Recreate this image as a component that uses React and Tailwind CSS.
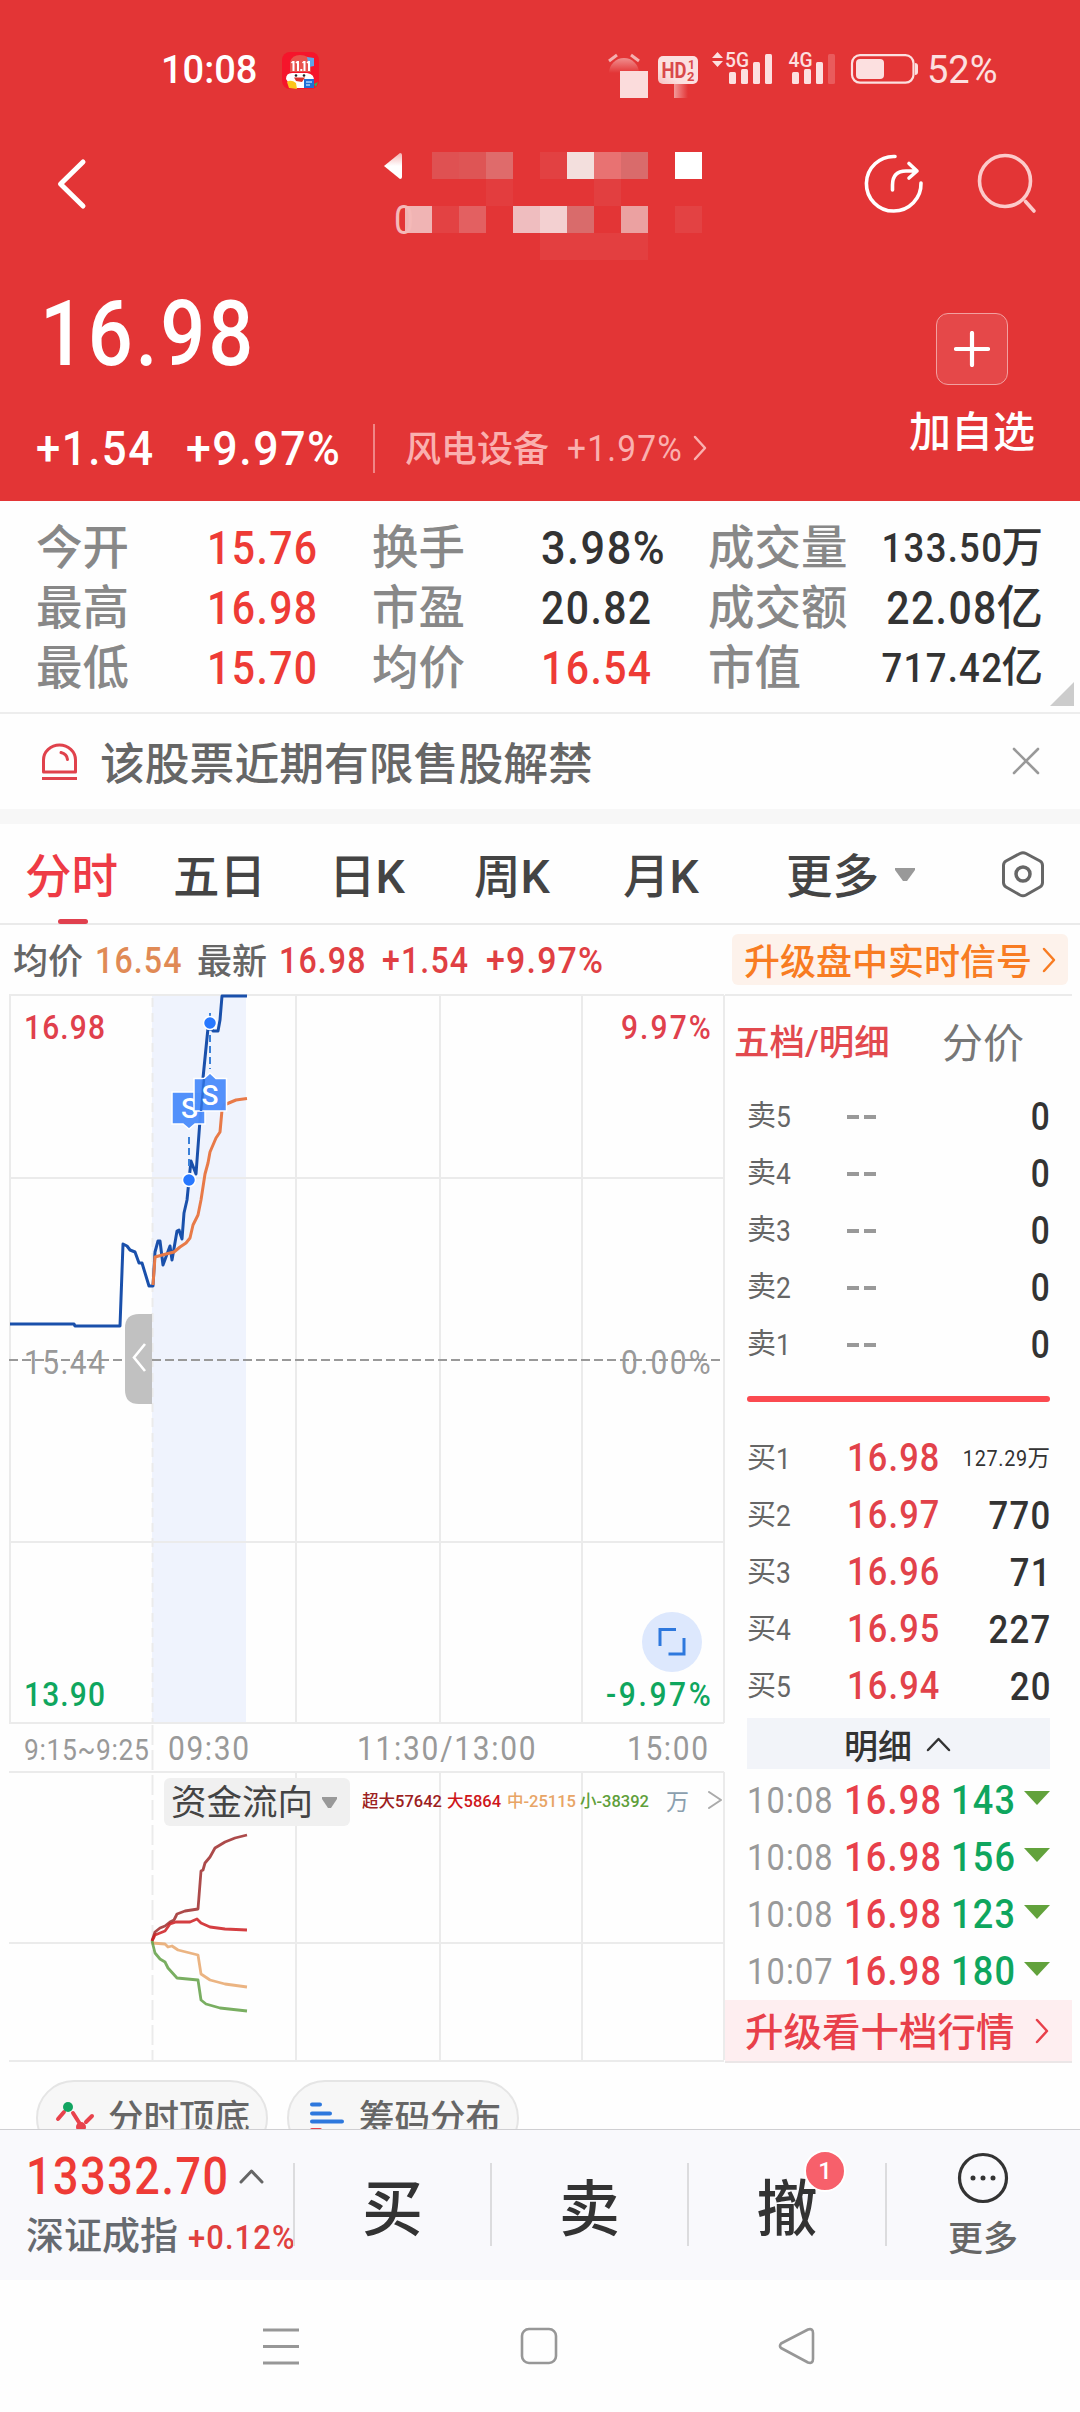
import { clsx } from "clsx";

const stats = [
  [
    { label: "今开", value: "15.76", red: true },
    { label: "换手", value: "3.98%" },
    { label: "成交量", value: "133.50", unit: "万", small: true },
  ],
  [
    { label: "最高", value: "16.98", red: true },
    { label: "市盈", value: "20.82" },
    { label: "成交额", value: "22.08", unit: "亿" },
  ],
  [
    { label: "最低", value: "15.70", red: true },
    { label: "均价", value: "16.54", red: true },
    { label: "市值", value: "717.42", unit: "亿", small: true },
  ],
];

const sells = ["5", "4", "3", "2", "1"];

const buys = [
  { level: "1", price: "16.98", amount: "127.29", unit: "万" },
  { level: "2", price: "16.97", amount: "770" },
  { level: "3", price: "16.96", amount: "71" },
  { level: "4", price: "16.95", amount: "227" },
  { level: "5", price: "16.94", amount: "20" },
];

const deals = [
  { time: "10:08", price: "16.98", amount: "143" },
  { time: "10:08", price: "16.98", amount: "156" },
  { time: "10:08", price: "16.98", amount: "123" },
  { time: "10:07", price: "16.98", amount: "180" },
];

// 12 x 4 censor grid over the stock name
const mosaic = [
  ["", "", "#df5152", "#de5555", "#df6b6b", "", "#e24142", "#f3dfdd", "#e87272", "#d96b6b", "", "#ffffff"],
  ["", "", "", "", "#e33d3e", "", "", "", "#e23f40", "", "", ""],
  ["", "#f0b4b4", "#e34243", "#e36061", "", "#efbdbf", "#f3d0d1", "#d96b6b", "", "#eba1a1", "", "#e34243"],
  ["", "", "", "", "", "", "#e33f40", "#e33f40", "#e33f40", "#e33f40", "", ""],
];

// condensed tabular digits, signed and percent values run a little wider
function Num({ children, className, right, wide }) {
  return (
    <span
      className={clsx(
        "inline-block tracking-[0.035em]",
        wide ? "scale-x-[0.93]" : "scale-x-[0.88]",
        right ? "-mr-[0.035em] origin-right" : "origin-left",
        className
      )}
    >
      {children}
    </span>
  );
}

function Chevron({ className, d = "M2 2 L12 13 L2 24", w = 14, h = 26, stroke = 2.5 }) {
  return (
    <svg className={clsx("shrink-0", className)} width={w} height={h} viewBox={`0 0 ${w} ${h}`} fill="none">
      <path d={d} stroke="currentColor" strokeWidth={stroke} strokeLinecap="round" strokeLinejoin="round" />
    </svg>
  );
}

function AppBadge() {
  return (
    <svg className="ml-[28px]" width="37" height="37" viewBox="0 0 37 37">
      <rect width="37" height="37" rx="8" fill="#f5152b" />
      <path d="M8 20 V10 Q10 3 18 3 Q27 3 29 10 V20 Z" fill="#e8534c" />
      <path d="M25 5 L32 6 L32 14 L27 15 Z" fill="#5fa5e8" />
      <path d="M4 27 Q4 20 12 21 L25 21 Q33 22 32 30 L24 36 L10 36 Z" fill="#fff" />
      <path d="M11.500 9 V19 M16 9 V19 M22.500 9 V19 M27 9 V19" stroke="#fff" strokeWidth="2" />
      <path d="M9.500 11 L11 9.500 M14 11 L15.500 9.500 M20.500 11 L22 9.500 M25 11 L26.500 9.500" stroke="#fff" strokeWidth="1.500" />
      <rect x="18.300" y="17" width="2" height="2" fill="#fff" />
      <circle cx="14" cy="23.500" r="1.300" fill="#222" />
      <circle cx="22" cy="23.500" r="1.300" fill="#222" />
      <path d="M12 25.500 H23 L20 30 L14 29 Z" fill="#d9342b" />
      <path d="M5 30 Q9 27 14 31 L15 37 L7 36 Z" fill="#fcc51c" />
      <rect x="22" y="27" width="10" height="9" fill="#1f6fd6" />
      <path d="M24 30 H30 M24 33 H28" stroke="#a8d2ff" strokeWidth="1.300" />
      <path d="M32 32 L36 30 L34 35 Z" fill="#2fb45a" />
    </svg>
  );
}

function StatusIcons() {
  return (
    <svg width="316" height="52" viewBox="605 50 316 52" fill="#fce0e0" overflow="visible">
      <defs>
        <linearGradient id="smear" x1="0" x2="1" y1="0" y2="0">
          <stop offset="0" stopColor="#f29a9a" />
          <stop offset="1" stopColor="#e33536" />
        </linearGradient>
        <linearGradient id="bell" x1="0" x2="0" y1="0" y2="1">
          <stop offset="0" stopColor="#f08f8f" />
          <stop offset="1" stopColor="#e33536" />
        </linearGradient>
        <linearGradient id="hd" x1="0" x2="1" y1="1" y2="0">
          <stop offset="0" stopColor="#f6c0c0" />
          <stop offset="0.3" stopColor="#fce0e0" />
        </linearGradient>
      </defs>
      {/* alarm */}
      <path d="M609 61 L617 55 M639 61 L631 55" stroke="#f4b0b0" strokeWidth="3" />
      <path d="M609 73 A15 15 0 0 1 639 73 Z" fill="url(#bell)" />
      <rect x="620" y="71" width="28" height="27" fill="#fbdcdc" />
      {/* hd */}
      <rect x="674" y="80" width="14" height="18" fill="url(#smear)" />
      <rect x="658" y="56" width="40" height="28" rx="5" fill="url(#hd)" />
      <text x="661.500" y="78" className="font-[Roboto] font-bold" fontSize="22" textLength="25" lengthAdjust="spacingAndGlyphs" fill="#d9494a">HD</text>
      <text x="688" y="69" className="font-[Roboto] font-bold" fontSize="12" fill="#d9494a">1</text>
      <text x="687" y="80.500" className="font-[Roboto] font-bold" fontSize="13" fill="#d9494a">2</text>
      {/* 5G */}
      <path d="M717.500 52 L723 58 H712 Z M717.500 67 L723 61 H712 Z" />
      <text x="725" y="67" className="font-[Roboto] font-medium" fontSize="20" textLength="24" lengthAdjust="spacingAndGlyphs">5G</text>
      <rect x="729" y="72" width="7" height="12" rx="1.500" />
      <rect x="741" y="69" width="7" height="15" rx="1.500" />
      <rect x="753" y="62" width="7" height="22" rx="1.500" />
      <rect x="765" y="54" width="7" height="30" rx="1.500" />
      {/* 4G */}
      <text x="788.500" y="67" className="font-[Roboto] font-medium" fontSize="20" textLength="24" lengthAdjust="spacingAndGlyphs">4G</text>
      <rect x="792" y="72" width="7" height="12" rx="1.500" />
      <rect x="804" y="69" width="7" height="15" rx="1.500" />
      <rect x="816" y="62" width="7" height="22" rx="1.500" />
      <rect x="828" y="54" width="7" height="30" rx="1.500" fill="#e95b5c" />
      {/* battery */}
      <rect x="852" y="55.200" width="61.500" height="27.500" rx="8" fill="none" stroke="#fce0e0" strokeWidth="2.200" />
      <rect x="856" y="59" width="28" height="20" rx="4" />
      <path d="M915 63 Q918 63 918 66 V72 Q918 75 915 75 Z" />
    </svg>
  );
}

function Header() {
  return (
    <header className="h-[501px] bg-[#e33536] text-white">
      <div className="flex h-[140px] items-center pr-[79px] pl-[161px]">
        <span className="w-[93px] text-[38px] font-medium">10:08</span>
        <AppBadge />
        <div className="mt-3 ml-auto">
          <StatusIcons />
        </div>
        <span className="ml-[6px] w-[74px] text-[38px] text-[#fce0e0]">52%</span>
      </div>

      <div className="flex h-[88px] items-center">
        <svg className="ml-[55px]" width="34" height="52" viewBox="0 0 34 52" fill="none">
          <path d="M28 4 L5.500 26 L28 48" stroke="#fff" strokeWidth="5" strokeLinecap="round" strokeLinejoin="round" />
        </svg>
        <div className="relative mt-[12px] ml-[289px] grid h-[108px] w-[324px] shrink-0 grid-cols-12 grid-rows-4 self-start">
          {mosaic.flat().map((color, i) => (
            <div key={i} style={{ backgroundColor: color || undefined }} />
          ))}
          <svg className="absolute top-0 left-0" width="60" height="108" viewBox="378 153 60 108">
            <defs>
              <linearGradient id="tri" x1="0" x2="0" y1="0" y2="1">
                <stop offset="0" stopColor="#f3b5b5" />
                <stop offset="0.5" stopColor="#fff" />
              </linearGradient>
            </defs>
            <path d="M384 167 L400 154 Q402 154 402 156 V178 Q402 180 400 180 Z" fill="url(#tri)" />
          </svg>
          <span className="absolute top-[49px] left-[16px] origin-left scale-x-[0.88] text-[40px] text-[#f4b9b9]">0</span>
        </div>
        <svg className="ml-[160px]" width="64" height="64" viewBox="862 152 64 64" fill="none" stroke="#fff" strokeWidth="3.600" strokeLinecap="round" strokeLinejoin="round">
          <path d="M895 156.500 A27.300 27.300 0 1 0 921 183" />
          <path d="M892.500 190 V185 Q892.500 171 906 171 H917 M909 163.500 L917 171 L909 178" />
        </svg>
        <svg className="ml-[49px]" width="64" height="64" viewBox="975 152 64 64" fill="none" stroke="#fccaca" strokeWidth="3.600" strokeLinecap="round">
          <circle cx="1005" cy="181" r="25.500" />
          <path d="M1025.500 201.500 L1034 211" />
        </svg>
      </div>

      <div className="flex justify-between">
        <div className="pt-[62px]">
          <div className="flex pl-[40px] text-[90px] font-medium">
            <Num>16.98</Num>
          </div>
          <div className="mt-[43px] flex h-[50px] items-center pl-[36px]">
            <div className="w-[150px] pt-[2px] text-[48px] font-medium">
              <Num className="scale-x-[0.91]">+1.54</Num>
            </div>
            <div className="w-[187px] pt-[2px] text-[48px] font-medium">
              <Num wide>+9.97%</Num>
            </div>
            <span className="h-[49px] w-[2px] bg-[#f08686]" />
            <span className="mt-[3px] ml-[30px] w-[162px] text-[36px] font-medium text-[#fab0af]">风电设备</span>
            <div className="w-[126px] pt-[2px] text-[36px] text-[#fab0af]">
              <Num wide>+1.97%</Num>
            </div>
            <Chevron className="text-[#fab0af]" />
          </div>
        </div>
        <div className="mr-[36px] flex w-[144px] flex-col items-center pt-[85px]">
          <div className="flex size-[72px] items-center justify-center rounded-xl border border-[#f2a0a0] bg-[#e54849]">
            <svg width="36" height="36" viewBox="0 0 36 36" stroke="#fff" strokeWidth="4.200" strokeLinecap="round">
              <path d="M18 2 V34 M2 18 H34" />
            </svg>
          </div>
          <span className="mt-[27px] text-[42px] font-medium">加自选</span>
        </div>
      </div>
    </header>
  );
}

function Stats() {
  return (
    <section className="relative h-[213px] border-b-2 border-[#ededed] pt-[17px]">
      {stats.map((row, i) => (
        <div key={i} className="flex h-[60px] items-center pr-[37px] pl-[36px] text-[46.500px] font-medium">
          <span className="w-[171px] text-[#888]">{row[0].label}</span>
          <div className="w-[165px] text-[#ee3b36]">
            <Num>{row[0].value}</Num>
          </div>
          <span className="w-[169px] text-[#888]">{row[1].label}</span>
          <div className={clsx("w-[167px]", row[1].red ? "text-[#ee3b36]" : "text-[#333]")}>
            <Num wide={row[1].value.endsWith("%")}>{row[1].value}</Num>
          </div>
          <span className="text-[#888]">{row[2].label}</span>
          <div className={clsx("ml-auto flex items-center text-[#333]", row[2].small ? "text-[41.500px]" : "text-[46.500px]")}>
            <Num right>{row[2].value}</Num>
            <span>{row[2].unit}</span>
          </div>
        </div>
      ))}
      <svg className="absolute right-[6px] bottom-[6px]" width="24" height="24" viewBox="0 0 24 24">
        <path d="M24 0 V24 H0 Z" fill="#ccc" />
      </svg>
    </section>
  );
}

function Notice() {
  return (
    <section className="flex h-[110px] items-center border-b-[15px] border-[#f7f7f7] pr-[39px] pl-[41px]">
      <svg width="37" height="38" viewBox="0 0 37 38" fill="none" stroke="#e0424c" strokeWidth="3">
        <path d="M2.500 29 V17 A16 15 0 0 1 34.500 17 V29 Z" strokeLinejoin="round" />
        <path d="M20 9.500 Q26 11 26.500 16.500" strokeLinecap="round" />
        <path d="M1 35.500 H36" />
      </svg>
      <span className="mt-[7px] ml-[22px] text-[44.800px] font-medium text-[#666]">该股票近期有限售股解禁</span>
      <Chevron className="mb-[2px] ml-auto text-[#999]" w={30} h={30} stroke={2.6} d="M3 3 L27 27 M27 3 L3 27" />
    </section>
  );
}

function Tabs() {
  return (
    <nav className="flex h-[101px] items-center border-b-2 border-[#eaeaea] pt-[8px] pl-[25px] text-[46.500px] font-medium text-[#444]">
      <div className="relative w-[148px] text-[#ee3b45]">
        分时
        <span className="absolute -bottom-[23px] left-[33px] h-[5px] w-[30px] rounded-full bg-[#e0404e]" />
      </div>
      <span className="w-[156px]">五日</span>
      <span className="w-[145px]">日K</span>
      <span className="w-[149px]">周K</span>
      <span className="w-[163px]">月K</span>
      <span className="w-[109px]">更多</span>
      <svg className="mb-[5px]" width="20" height="14" viewBox="0 0 20 14">
        <path d="M0 0 H20 V2 L12 13 H8 L0 2 Z" fill="#999" />
      </svg>
      <svg className="mb-[8px] ml-[85px]" width="46" height="50" viewBox="1000 849 46 50" fill="none" stroke="#666" strokeWidth="3">
        <path d="M1020 853.500 Q1023 852 1026 853.500 L1040 861 Q1042.500 862.500 1042.500 865.500 V882.500 Q1042.500 885.500 1040 887 L1026 895 Q1023 896.500 1020 895 L1006 887 Q1003.500 885.500 1003.500 882.500 V865.500 Q1003.500 862.500 1006 861 Z" />
        <circle cx="1023" cy="874" r="7" strokeWidth="3.500" />
      </svg>
    </nav>
  );
}

function QuoteLine() {
  return (
    <section className="flex h-[69px] items-center pl-[13px] text-[36.500px] font-medium">
      <span className="mt-[5px] w-[82px] text-[35px] text-[#666]">均价</span>
      <div className="mt-[3px] w-[102px] text-[#e08a55]">
        <Num>16.54</Num>
      </div>
      <span className="mt-[5px] w-[82px] text-[35px] text-[#666]">最新</span>
      <div className="mt-[3px] w-[103px] text-[#e03f43]">
        <Num>16.98</Num>
      </div>
      <div className="mt-[3px] w-[104px] text-[#e03f43]">
        <Num>+1.54</Num>
      </div>
      <div className="mt-[3px] text-[#e03f43]">
        <Num wide>+9.97%</Num>
      </div>
      <div className="mr-[12px] ml-auto flex h-[51px] w-[336px] items-center rounded-md bg-[#fdf2eb] pl-[12px] text-[36px] text-[#f87c22]">
        <span className="mt-[6px] w-[298px]">升级盘中实时信号</span>
        <Chevron w={14} h={26} />
      </div>
    </section>
  );
}

function PriceChart() {
  return (
    <svg className="absolute inset-0" width="725" height="1068" viewBox="0 994 725 1068" fill="none">
      <rect x="152" y="996" width="94" height="727" fill="#eff3fd" />
      <g stroke="#ebebeb" strokeWidth="2">
        <path d="M9 995 H724 M9 1178 H724 M9 1542 H724 M9 1723 H724 M9 1772 H724 M9 1943 H724" />
        <path d="M10 995 V1723 M296 995 V1723 M440 995 V1723 M582 995 V1723 M724 995 V1723" />
        <path d="M296 1772 V2060 M440 1772 V2060 M582 1772 V2060 M724 1772 V2060" />
        <path d="M152.500 998 V1723" strokeDasharray="9 6" />
        <path d="M152.500 1725 V2060" strokeDasharray="20 5" />
      </g>
      <path d="M9 2061 H724" stroke="#ebebeb" strokeWidth="2" />
      <g className="font-[Roboto]" fontSize="34" fill="#999">
        <text transform="translate(24 1374) scale(0.88 1)" textLength="92">15.44</text>
        <text transform="translate(621 1374) scale(0.88 1)" textLength="102">0.00%</text>
      </g>
      <path d="M9 1360 H724" stroke="#999" strokeWidth="2" strokeDasharray="9 4" />
      <path
        d="M10 1324 H74 L75 1326 H120 L123 1244 L127 1246 L130 1250 L135 1252 L139 1263 H142 L149 1286 H153 L155 1252 L158 1241 H160 L163 1265 L170 1246 L172 1260 L177 1231 L179 1230 L182 1239 L184 1213 L187 1200 L189 1180 L191 1161 L196 1174 L200 1120 L203 1078 L208 1028 L210 1023 L213 1031 H218 L220 1020 L222 996 H247"
        stroke="#1a50ab"
        strokeWidth="3"
        strokeLinejoin="round"
      />
      <path
        d="M153 1285 L155 1257 L166 1254 L174 1252 L180 1247 L186 1243 L190 1238 L193 1225 L198 1215 L201 1200 L205 1174 L208 1163 L210 1152 L216 1138 L220 1132 L222 1110 L224 1105 L236 1100 L247 1098.500"
        stroke="#e87a48"
        strokeWidth="3"
        strokeLinejoin="round"
      />
      <path d="M189 1137 V1166 M210 1013 V1069" stroke="#3a80d8" strokeWidth="2" strokeDasharray="7 4" />
      <g stroke="#fff" strokeWidth="1.500">
        <circle cx="189" cy="1180" r="6.500" fill="#2878ff" />
        <circle cx="210" cy="1023" r="6.500" fill="#2878ff" />
        <path d="M172 1092 H205 V1124 H195 L189 1129 L183 1124 H172 Z" fill="#4d8dfb" fillOpacity="0.97" />
      </g>
      <text x="181" y="1118" className="font-[Roboto] font-medium" fontSize="28" fill="#fff">S</text>
      <path d="M194 1078.500 H204 L210 1073 L216 1078.500 H226.500 V1111 H194 Z" fill="#4d8dfb" fillOpacity="0.97" stroke="#fff" strokeWidth="1.500" />
      <path d="M204 1079 L201 1111" stroke="#2f6fd8" strokeWidth="2.500" />
      <text x="201.500" y="1105" className="font-[Roboto] font-medium" fontSize="28" fill="#fff">S</text>

      <path d="M152 1314 H139 Q125 1314 125 1328 V1390 Q125 1404 139 1404 H152 Z" fill="#c1c1c1" />
      <path d="M145 1344 L134 1357.500 L145 1371" stroke="#fff" strokeWidth="2.600" />

      <g className="font-[Roboto] font-medium" fontSize="34">
        <text transform="translate(24 1039) scale(0.88 1)" fill="#e0404c" textLength="92">16.98</text>
        <text transform="translate(621 1039) scale(0.88 1)" fill="#e0404c" textLength="102">9.97%</text>
        <text transform="translate(24 1706) scale(0.88 1)" fill="#0fa65e" textLength="92">13.90</text>
        <text transform="translate(606 1706) scale(0.88 1)" fill="#0fa65e" textLength="119">-9.97%</text>
      </g>
      <circle cx="672" cy="1642" r="30" fill="#dde8fd" />
      <path d="M676 1629.500 H660 V1646 M668.500 1654 H684 V1638" stroke="#2e78dd" strokeWidth="3" />

      <g className="font-[Roboto]" fill="#999" fontSize="34">
        <text transform="translate(24 1760) scale(0.88 1)" fontSize="30" textLength="142">9:15~9:25</text>
        <text transform="translate(168 1760) scale(0.88 1)" textLength="92">09:30</text>
        <text transform="translate(357 1760) scale(0.88 1)" textLength="203">11:30/13:00</text>
        <text transform="translate(627 1760) scale(0.88 1)" textLength="92">15:00</text>
      </g>

      {/* fund flow */}
      <g strokeWidth="2.800" strokeLinejoin="round" strokeOpacity="0.85">
        <path d="M152 1941 L155 1932 L160 1928 L165 1926 L170 1922 L174 1920 L177 1914 L185 1911 L198 1909 L201 1871 L203 1870 L205 1863 L210 1857 L215 1848 L225 1842 L235 1838 L247 1835" stroke="#9d2a2a" />
        <path d="M152 1941 L155 1935 L165 1931 L170 1924 L176 1922 H190 L197 1919 L201 1923 L210 1927 L225 1929 L247 1930" stroke="#cc1c20" />
        <path d="M152 1943 L165 1944 L168 1947 L172 1946 L178 1950 L198 1955 L201 1974 L210 1980 L225 1984 L247 1987" stroke="#e8a76c" />
        <path d="M152 1941 L155 1953 L160 1959 L165 1962 L168 1968 L177 1978 L198 1980 L201 2000 L206 2004 L220 2008 L247 2011" stroke="#62a045" />
      </g>
    </svg>
  );
}

function FlowLegend() {
  return (
    <div className="relative flex h-[60px] items-center pt-[2px] pl-[164px]">
      <div className="flex h-[48px] w-[186px] items-center rounded-md bg-[#f0f0f0] pl-[7px] text-[35.500px] text-[#444]">
        <span className="mt-[3px] w-[151px]">资金流向</span>
        <svg width="15" height="11" viewBox="0 0 15 11">
          <path d="M0 0 H15 V2 L9 11 H6 L0 2 Z" fill="#999" />
        </svg>
      </div>
      <div className="flex items-center text-[16.500px] font-medium">
        <span className="ml-[12px] w-[85px] text-[#9c2020]">超大57642</span>
        <span className="w-[60px] text-[#cf161a]">大5864</span>
        <span className="w-[73px] text-[#e8a566]">中-25115</span>
        <span className="w-[86px] text-[#5f9f3a]">小-38392</span>
        <span className="w-[42px] text-[23px] font-normal text-[#8b9fae]">万</span>
      </div>
      <Chevron className="mb-[4px] text-[#aaa]" w={15} h={18} stroke={2} d="M1 1 L13 9 L1 17" />
    </div>
  );
}

function OrderBook() {
  return (
    <div className="flex flex-col border-t-2 border-[#ebebeb]">
      <div className="flex h-[92px] items-center pt-[4px] pl-[9px]">
        <span className="w-[208px] text-[35.500px] font-medium text-[#e2494e]">五档/明细</span>
        <span className="text-[41px] text-[#777]">分价</span>
      </div>
      <div className="pr-[22px] pl-[22px]">
        {sells.map((level) => (
          <div key={level} className="flex h-[57px] items-center text-[#666]">
            <div className="flex w-[100px] items-center">
              <span className="text-[29px]">卖</span>
              <Num className="text-[30px]">{level}</Num>
            </div>
            <div className="flex gap-[5px]">
              <i className="h-[4px] w-[12px] bg-[#999]" />
              <i className="h-[4px] w-[12px] bg-[#999]" />
            </div>
            <div className="ml-auto text-[38px] font-medium text-[#333]">
              <Num right>0</Num>
            </div>
          </div>
        ))}
        <div className="mt-[23px] h-[6px] w-[303px] rounded-full bg-[#fb4a50]" />
        <div className="mt-[28px]">
          {buys.map((row) => (
            <div key={row.level} className="flex h-[57px] items-center text-[#666]">
              <div className="flex w-[100px] items-center">
                <span className="text-[29px]">买</span>
                <Num className="text-[30px]">{row.level}</Num>
              </div>
              <div className="text-[39px] font-medium text-[#e2424a]">
                <Num>{row.price}</Num>
              </div>
              <div className={clsx("ml-auto flex text-[#333]", row.unit ? "text-[22.500px]" : "text-[39.500px] font-medium")}>
                <Num right>{row.amount}</Num>
                {row.unit && <span>{row.unit}</span>}
              </div>
            </div>
          ))}
        </div>
        <div className="mt-[3px] flex h-[51px] w-[303px] items-center bg-[#f2f4f9] pl-[97px] text-[34px] font-medium text-[#333]">
          <span className="mt-[7px] w-[82px]">明细</span>
          <Chevron className="mt-[2px]" w={25} h={15} d="M2 13 L12.5 2 L23 13" />
        </div>
        <div className="pt-[3px]">
          {deals.map((row, i) => (
            <div key={i} className="flex h-[57px] items-center">
              <div className="w-[97px] text-[37px] text-[#999]">
                <Num>{row.time}</Num>
              </div>
              <div className="w-[107px] text-[41px] font-medium text-[#e8404a]">
                <Num>{row.price}</Num>
              </div>
              <div className="w-[73px] text-[41px] font-medium text-[#0fa65e]">
                <Num>{row.amount}</Num>
              </div>
              <svg className="mb-[5px] shrink-0" width="26" height="14" viewBox="0 0 26 14">
                <path d="M0 0 H26 L13 14 Z" fill="#62a23c" />
              </svg>
            </div>
          ))}
        </div>
      </div>
      <div className="mt-auto flex h-[63px] items-center border-b-2 border-[#ebe6e7] bg-[#feeef0] pl-[20px] text-[38.500px] font-medium text-[#e8404a]">
        <span className="mt-[6px] w-[290px]">升级看十档行情</span>
        <Chevron w={14} h={26} />
      </div>
    </div>
  );
}

function Market() {
  return (
    <section className="flex h-[1068px]">
      <div className="relative w-[725px] pt-[777px]">
        <PriceChart />
        <FlowLegend />
      </div>
      <div className="grid w-[346px]">
        <OrderBook />
      </div>
    </section>
  );
}

function Tools() {
  return (
    <section className="flex h-[67px] gap-[19px] overflow-hidden pt-[18px] pl-[36px] text-[35.500px] font-medium text-[#666]">
      <div className="flex h-[76px] w-[232px] shrink-0 items-center rounded-full border-2 border-[#e5e5e5] bg-[#f7f7f7] pl-[17px]">
        <svg width="40" height="36" viewBox="0 0 40 36" fill="none" stroke="#e8434c" strokeWidth="4" strokeLinecap="round">
          <path d="M3 19 L9 12 M18 13 L25 24 M31 22 L37 16" />
          <circle cx="13" cy="7" r="5" fill="#12a561" stroke="none" />
          <circle cx="26" cy="27" r="5" fill="#e8434c" stroke="none" />
        </svg>
        <span className="mt-[2px] ml-[13px]">分时顶底</span>
      </div>
      <div className="flex h-[76px] w-[232px] shrink-0 items-center rounded-full border-2 border-[#e5e5e5] bg-[#f7f7f7] pl-[20px]">
        <svg width="36" height="36" viewBox="0 0 36 36" strokeWidth="4" strokeLinecap="round">
          <path d="M3 4.500 H11 M3 13.500 H21 M3 21.500 H33" stroke="#2e78dd" />
          <path d="M3 30 H11" stroke="#e8434c" />
        </svg>
        <span className="mt-[2px] ml-[14px]">筹码分布</span>
      </div>
    </section>
  );
}

function BottomBar() {
  return (
    <footer className="flex h-[151px] items-center border-t border-[#cfcfd2] bg-[#f9f9fc] text-[#333]">
      <div className="h-full w-[293px] shrink-0 overflow-hidden pt-[20px] pl-[26px]">
        <div className="flex h-[52px] items-center">
          <div className="w-[213px] text-[51px] font-medium text-[#ee3b36]">
            <Num>13332.70</Num>
          </div>
          <Chevron className="text-[#666]" w={25} h={16} stroke={3} d="M2 14 L12.5 3 L23 14" />
        </div>
        <div className="mt-[12px] flex h-[44px] items-center">
          <span className="w-[162px] shrink-0 text-[38px] font-medium text-[#666a70]">深证成指</span>
          <div className="mt-[2px] text-[34px] text-[#e0403e]">
            <Num className="scale-x-[0.91] font-medium">+0.12%</Num>
          </div>
        </div>
      </div>
      <div className="-mt-[1px] flex h-[83px] items-center border-l-2 border-[#dcdcde] pt-[12px] text-[61px] font-medium">
        <span className="w-[195px] text-center">买</span>
      </div>
      <div className="-mt-[1px] flex h-[83px] items-center border-l-2 border-[#dcdcde] pt-[12px] text-[61px] font-medium">
        <span className="w-[195px] text-center">卖</span>
      </div>
      <div className="relative -mt-[1px] flex h-[83px] items-center border-l-2 border-[#dcdcde] pt-[12px] text-[61px] font-medium">
        <span className="w-[196px] text-center">撤</span>
        <span className="absolute -top-[13px] left-[115px] flex size-[42px] items-center justify-center rounded-full border-2 border-white bg-[#f7606b] text-[24px] text-white">
          1
        </span>
      </div>
      <div className="-mt-[1px] flex h-[83px] w-[194px] flex-col items-center justify-center border-l-2 border-[#dcdcde]">
        <svg className="shrink-0" width="52" height="52" viewBox="0 0 52 52">
          <circle cx="26" cy="26" r="23.500" fill="none" stroke="#333" strokeWidth="3.200" />
          <path d="M16 26 h0.010 M26 26 h0.010 M36 26 h0.010" stroke="#333" strokeWidth="5" strokeLinecap="round" />
        </svg>
        <span className="mt-[18px] text-[35px] font-medium text-[#666]">更多</span>
      </div>
    </footer>
  );
}

function SystemNav() {
  return (
    <div className="flex h-[132px] items-center pb-[1px] pl-[262px]">
      <svg width="38" height="38" viewBox="0 0 38 38" stroke="#979797" strokeWidth="3">
        <path d="M1 3 H37 M1 19.500 H37 M1 36 H37" />
      </svg>
      <svg className="ml-[219px]" width="40" height="40" viewBox="0 0 40 40" fill="none" stroke="#979797" strokeWidth="2.600">
        <rect x="3" y="3" width="34" height="34" rx="7" />
      </svg>
      <svg className="ml-[219px]" width="38" height="40" viewBox="0 0 38 40" fill="none" stroke="#979797" strokeWidth="2.600" strokeLinejoin="round">
        <path d="M3 17.500 Q1 20 3 22 L30 36.500 Q35 38 35 33 V7 Q35 2 30 3.500 Z" />
      </svg>
    </div>
  );
}

export default function App() {
  return (
    <main className="w-[1080px] bg-[#fefefe] font-[Roboto,'Noto_Sans_CJK_SC',sans-serif] leading-none whitespace-nowrap">
      <Header />
      <Stats />
      <Notice />
      <Tabs />
      <QuoteLine />
      <Market />
      <Tools />
      <BottomBar />
      <SystemNav />
    </main>
  );
}
